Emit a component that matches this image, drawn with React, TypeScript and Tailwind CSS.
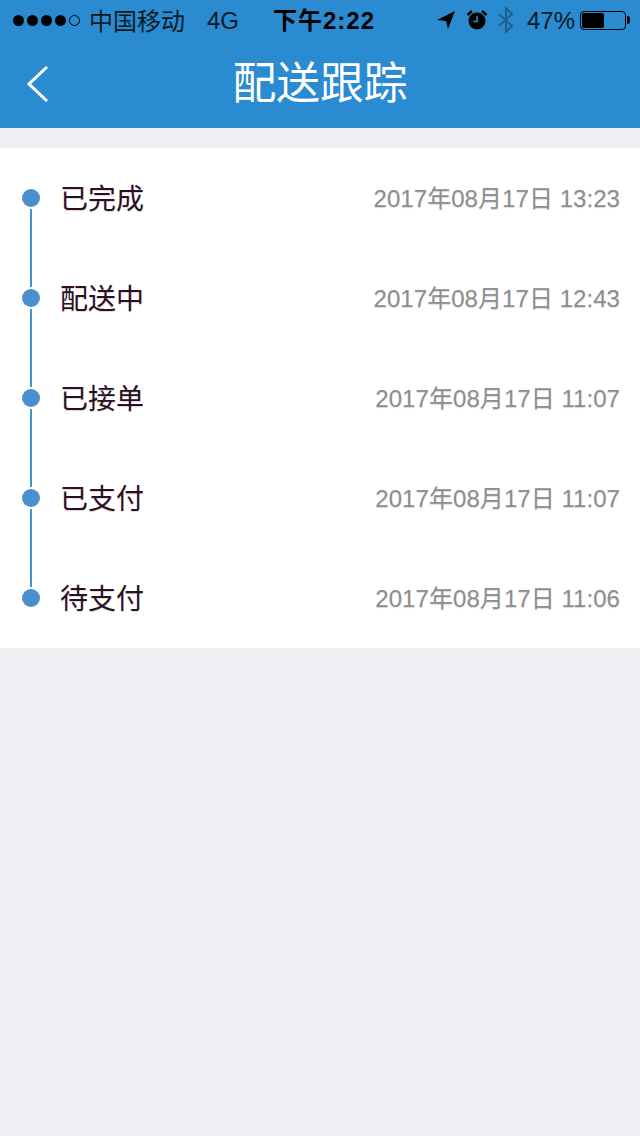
import React from "react";

const FONT = "font-['Liberation_Sans','Noto_Sans_CJK_SC',sans-serif]";

const steps = [
	{ label: "已完成", time: "2017年08月17日 13:23" },
	{ label: "配送中", time: "2017年08月17日 12:43" },
	{ label: "已接单", time: "2017年08月17日 11:07" },
	{ label: "已支付", time: "2017年08月17日 11:07" },
	{ label: "待支付", time: "2017年08月17日 11:06" },
];

const StatusBar: React.FC = () => (
	<div className="flex h-10 items-center text-[24px] leading-none text-[#0a1a24]">
		<div className="ml-[13px] flex w-[68px] gap-[3px]">
			{[0, 1, 2, 3].map((i) => (
				<span key={i} className="h-[11px] w-[11px] rounded-full bg-black" />
			))}
			<span className="h-[11px] w-[11px] rounded-full border border-black" />
		</div>
		<span className="ml-2 w-[118px] font-['Noto_Sans_CJK_SC',sans-serif]">中国移动</span>
		<span className="mt-[2px] w-[66px]">4G</span>
		<span className="mt-[2px] w-[164px] font-bold tracking-[1px] text-black">下午2:22</span>
		<svg width="18" height="18" viewBox="0 0 18 18" className="shrink-0">
			<path d="M18 0 L0 9 L9 10 L11 18 Z" fill="#000" />
		</svg>
		<svg width="22" height="22" viewBox="0 0 22 22" className="ml-[11px] shrink-0">
			<circle cx="11" cy="12" r="8.5" fill="#000" />
			<path d="M11 7 V12.5 H7" fill="none" stroke="#2a8bd0" strokeWidth="1.6" />
			<path d="M1.5 6 L6 2 M20.5 6 L16 2" stroke="#000" strokeWidth="2.4" />
		</svg>
		<svg width="16" height="26" viewBox="0 0 16 26" className="ml-[10px] shrink-0">
			<path d="M1 7 L14 19 L8 25 V1 L14 7 L1 19" fill="none" stroke="#1d5f90" strokeWidth="2" />
		</svg>
		<span className="ml-[13px] mt-[2px] w-[53px] shrink-0">47%</span>
		<div className="flex shrink-0 items-center">
			<div className="h-[19px] w-[46px] rounded-[4px] border border-black p-[1px]">
				<div className="h-full w-[22px] rounded-[2px] bg-black" />
			</div>
			<div className="ml-[1px] h-[8px] w-[3px] rounded-r-full bg-black" />
		</div>
	</div>
);

const Header: React.FC = () => (
	<div className="relative flex h-[88px] items-center justify-center">
		<svg width="24" height="38" viewBox="0 0 24 38" className="absolute left-[25px] top-[25px]">
			<path d="M22 2 L4 19 L22 36" fill="none" stroke="#fff" strokeWidth="3" />
		</svg>
		<span className="text-[43.8px] leading-none text-white">配送跟踪</span>
	</div>
);

const App: React.FC = () => {
	return (
		<div className={`flex min-h-[1136px] flex-col bg-[#efeff4] ${FONT}`}>
			<div className="bg-[#2a8bd0]">
				<StatusBar />
				<Header />
			</div>

			<div className="mt-5 bg-white">
				{steps.map((step, i) => (
					<div key={i} className="flex h-[100px] items-stretch pr-5">
						<div className="ml-[22px] flex w-[18px] flex-col items-center">
							<div className="flex-1 pb-[2px]">
								{i > 0 && <div className="h-full w-[2px] bg-[#4a8fd0]" />}
							</div>
							<div className="h-[18px] w-[18px] rounded-full bg-[#4a8fd0]" />
							<div className="flex-1 pt-[2px]">
								{i < steps.length - 1 && <div className="h-full w-[2px] bg-[#4a8fd0]" />}
							</div>
						</div>
						<div className="ml-5 flex flex-1 items-center justify-between pt-[2px]">
							<span className="mt-[2px] text-[28px] leading-none text-[#2d0f24] [text-shadow:0_1px_1px_rgba(0,0,0,0.15)]">
								{step.label}
							</span>
							<span className="text-[24.1px] leading-none text-[#8e8e8e] [text-shadow:0_1px_1px_rgba(0,0,0,0.15)]">
								{step.time}
							</span>
						</div>
					</div>
				))}
			</div>
		</div>
	);
};

export default App;
